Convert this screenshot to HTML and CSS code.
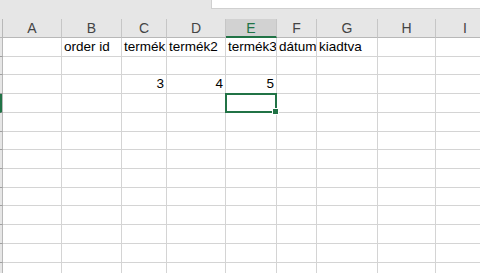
FILE: index.html
```html
<!DOCTYPE html>
<html>
<head>
<meta charset="utf-8">
<link rel="stylesheet" href="styles.css">
</head>
<body>
<div class="topbar"><div class="formula"></div></div>
<div class="viewport">
<div class="sheet">
  <div class="hdr corner"></div>
  <div class="hdr">A</div>
  <div class="hdr">B</div>
  <div class="hdr">C</div>
  <div class="hdr">D</div>
  <div class="hdr sel">E</div>
  <div class="hdr">F</div>
  <div class="hdr">G</div>
  <div class="hdr">H</div>
  <div class="hdr">I</div>

  <div class="rh"></div><div class="c"></div><div class="c">order id</div><div class="c">termék</div><div class="c">termék2</div><div class="c">termék3</div><div class="c">dátum</div><div class="c">kiadtva</div><div class="c"></div><div class="c"></div>
  <div class="rh"></div><div class="c"></div><div class="c"></div><div class="c"></div><div class="c"></div><div class="c"></div><div class="c"></div><div class="c"></div><div class="c"></div><div class="c"></div>
  <div class="rh"></div><div class="c"></div><div class="c"></div><div class="c num">3</div><div class="c num">4</div><div class="c num">5</div><div class="c"></div><div class="c"></div><div class="c"></div><div class="c"></div>
  <div class="rh active"></div><div class="c"></div><div class="c"></div><div class="c"></div><div class="c"></div><div class="c active-cell"></div><div class="c"></div><div class="c"></div><div class="c"></div><div class="c"></div>
  <div class="rh"></div><div class="c"></div><div class="c"></div><div class="c"></div><div class="c"></div><div class="c"></div><div class="c"></div><div class="c"></div><div class="c"></div><div class="c"></div>
  <div class="rh"></div><div class="c"></div><div class="c"></div><div class="c"></div><div class="c"></div><div class="c"></div><div class="c"></div><div class="c"></div><div class="c"></div><div class="c"></div>
  <div class="rh"></div><div class="c"></div><div class="c"></div><div class="c"></div><div class="c"></div><div class="c"></div><div class="c"></div><div class="c"></div><div class="c"></div><div class="c"></div>
  <div class="rh"></div><div class="c"></div><div class="c"></div><div class="c"></div><div class="c"></div><div class="c"></div><div class="c"></div><div class="c"></div><div class="c"></div><div class="c"></div>
  <div class="rh"></div><div class="c"></div><div class="c"></div><div class="c"></div><div class="c"></div><div class="c"></div><div class="c"></div><div class="c"></div><div class="c"></div><div class="c"></div>
  <div class="rh"></div><div class="c"></div><div class="c"></div><div class="c"></div><div class="c"></div><div class="c"></div><div class="c"></div><div class="c"></div><div class="c"></div><div class="c"></div>
  <div class="rh"></div><div class="c"></div><div class="c"></div><div class="c"></div><div class="c"></div><div class="c"></div><div class="c"></div><div class="c"></div><div class="c"></div><div class="c"></div>
  <div class="rh"></div><div class="c"></div><div class="c"></div><div class="c"></div><div class="c"></div><div class="c"></div><div class="c"></div><div class="c"></div><div class="c"></div><div class="c"></div>
  <div class="rh"></div><div class="c"></div><div class="c"></div><div class="c"></div><div class="c"></div><div class="c"></div><div class="c"></div><div class="c"></div><div class="c"></div><div class="c"></div>
</div>
</div>
</body>
</html>
```

FILE: styles.css
```css
html, body {
  margin: 0;
  padding: 0;
  background: #fff;
  overflow: hidden;
  width: 480px;
  height: 273px;
  font-family: "Liberation Sans", Arial, sans-serif;
}

.topbar {
  height: 19px;
  background: #e6e6e6;
  display: flex;
  justify-content: flex-end;
  align-items: flex-start;
}

.formula {
  width: 268px;
  height: 8px;
  background: #fff;
  border-left: 1px solid #d0d0d0;
  border-bottom: 1px solid #d0d0d0;
}

.viewport {
  width: 480px;
  height: 254px;
  overflow: hidden;
}

.sheet {
  display: grid;
  grid-template-columns: 3px 59px 60px 45px 59px 51px 40px 61px 58px 59px;
  grid-template-rows: 19px repeat(13, 18.72px);
  width: 495px;
}

.hdr {
  background: #e6e6e6;
  border-right: 1px solid #c6c6c6;
  border-bottom: 1px solid #b8b8b8;
  box-sizing: border-box;
  display: flex;
  align-items: center;
  justify-content: center;
  font-size: 14px;
  color: #444;
}

.hdr.corner {
  border-right: 1px solid #b8b8b8;
}

.hdr.sel {
  background: #d2d2d2;
  color: #217346;
  border-bottom: 2px solid #217346;
}

.rh {
  background: #e6e6e6;
  border-right: 1px solid #b8b8b8;
  border-bottom: 1px solid #9f9f9f;
  box-sizing: border-box;
}

.rh.active {
  border-left: 2px solid #217346;
}

.c {
  border-right: 1px solid #d4d4d4;
  border-bottom: 1px solid #d4d4d4;
  box-sizing: border-box;
  font-size: 13.5px;
  color: #000;
  white-space: nowrap;
  overflow: hidden;
  padding: 0 2px 1px 2px;
  display: flex;
  align-items: flex-end;
  line-height: 16px;
  min-width: 0;
}

.c.num {
  justify-content: flex-end;
}

.active-cell {
  position: relative;
  overflow: visible;
}

.active-cell::after {
  content: "";
  position: absolute;
  left: -1px;
  top: -1px;
  right: -1px;
  bottom: -1px;
  border: 2px solid #217346;
  box-sizing: border-box;
}

.active-cell::before {
  content: "";
  position: absolute;
  right: -3px;
  bottom: -3px;
  width: 5px;
  height: 5px;
  background: #217346;
  border: 1px solid #fff;
  z-index: 2;
}
```
